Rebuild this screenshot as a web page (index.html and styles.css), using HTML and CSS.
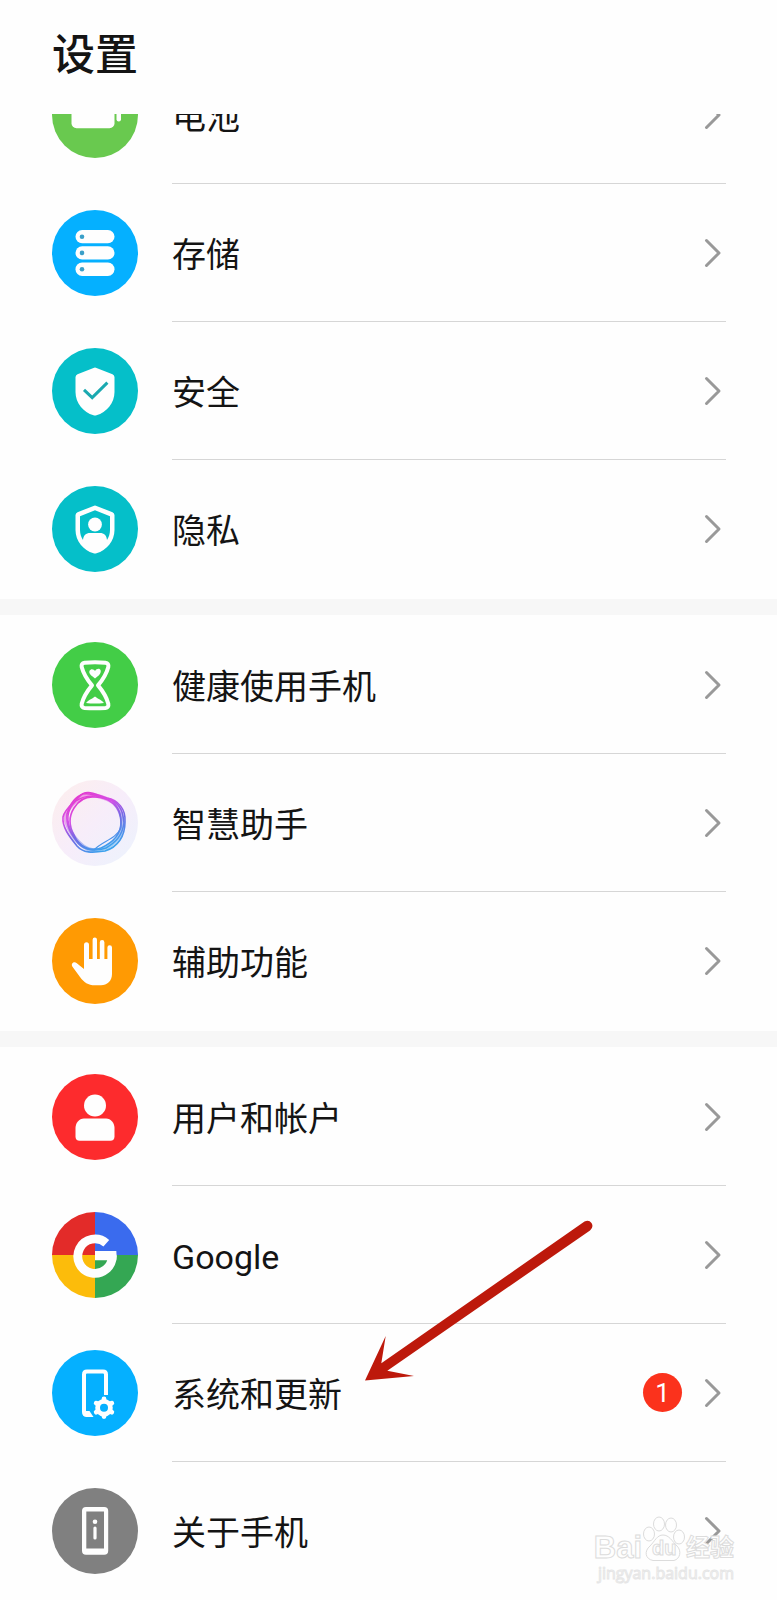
FILE: index.html
```html
<!DOCTYPE html>
<html lang="zh-CN">
<head>
<meta charset="utf-8">
<meta name="viewport" content="width=device-width, initial-scale=1">
<title>设置</title>
<link rel="stylesheet" href="styles.css">
</head>
<body>
<svg class="defs" aria-hidden="true">
  <symbol id="chevron" viewBox="0 0 18 30"><path d="M2.5 2.5 15 15 2.5 27.5" fill="none" stroke="#999" stroke-width="3" stroke-linecap="round" stroke-linejoin="round"/></symbol>
</svg>
<div class="screen">
  <header class="header"><h1 class="title">设置</h1></header>
  <main class="list">
    <nav class="group group-scrolled">
      <a class="row" href="#battery">
        <svg class="icon" viewBox="0 0 86 86" aria-hidden="true"><circle cx="43" cy="43" r="43" fill="#69c94f"/><rect x="19.500" y="28" width="43" height="28.300" rx="5" fill="#fefefe"/><rect x="64.500" y="35" width="4.500" height="14.500" rx="2.200" fill="#fefefe"/></svg>
        <span class="body"><span class="label">电池</span><svg class="chevron" aria-hidden="true"><use href="#chevron"/></svg></span>
      </a>
      <a class="row" href="#storage">
        <svg class="icon" viewBox="0 0 86 86" aria-hidden="true"><circle cx="43" cy="43" r="43" fill="#05b0ff"/><g fill="#fefefe"><rect x="23.500" y="20" width="39" height="13.300" rx="6.600"/><rect x="23.500" y="36.200" width="39" height="13.300" rx="6.600"/><rect x="23.500" y="52.600" width="39" height="13.300" rx="6.600"/></g><g fill="#3a9fc8"><circle cx="30" cy="26.700" r="2.300"/><circle cx="30" cy="42.900" r="2.300"/><circle cx="30" cy="59.200" r="2.300"/></g></svg>
        <span class="body"><span class="label">存储</span><svg class="chevron" aria-hidden="true"><use href="#chevron"/></svg></span>
      </a>
      <a class="row" href="#security">
        <svg class="icon" viewBox="0 0 86 86" aria-hidden="true"><circle cx="43" cy="43" r="43" fill="#05bfc9"/><path d="M41.500 19.900Q43 19.300 44.500 19.900L60.500 26.300Q62.500 27.200 62.500 29.300V44C62.500 55 54.500 64.500 44.500 67.300Q43 67.700 41.500 67.300C31.500 64.500 23.500 55 23.500 44V29.300Q23.500 27.200 25.500 26.300Z" fill="#fefefe"/><path d="M32 41.800 40.200 49.600 55.400 34.600" fill="none" stroke="#1aa9b0" stroke-width="3"/></svg>
        <span class="body"><span class="label">安全</span><svg class="chevron" aria-hidden="true"><use href="#chevron"/></svg></span>
      </a>
      <a class="row" href="#privacy">
        <svg class="icon" viewBox="0 0 86 86" aria-hidden="true"><circle cx="43" cy="43" r="43" fill="#05bfc9"/><path d="M41.500 19.900Q43 19.300 44.500 19.900L60.500 26.300Q62.500 27.200 62.500 29.300V44C62.500 55 54.500 64.500 44.500 67.300Q43 67.700 41.500 67.300C31.500 64.500 23.500 55 23.500 44V29.300Q23.500 27.200 25.500 26.300Z" fill="#fefefe"/><path d="M43 24.300 58 30.300V44C58 48 56.800 51 55 54 54.700 49.500 52 47 48 47H38C34 47 31.300 49.500 31 54 29.200 51 28 48 28 44V30.300Z" fill="#05bfc9"/><circle cx="43" cy="38.500" r="6.900" fill="#fefefe"/></svg>
        <span class="body"><span class="label">隐私</span><svg class="chevron" aria-hidden="true"><use href="#chevron"/></svg></span>
      </a>
    </nav>
    <nav class="group">
      <a class="row" href="#balance">
        <svg class="icon" viewBox="0 0 86 86" aria-hidden="true"><circle cx="43" cy="43" r="43" fill="#43cd47"/><path d="M32.500 20.800Q43 19.800 53.500 20.800 57 21.200 56.300 25C54.500 32 51 37.500 46 43.400 51 49.300 54.500 54.800 56.300 61.800Q57 65.500 53.500 65.900 43 66.800 32.500 65.900 29 65.500 29.700 61.800C31.500 54.800 35 49.300 40 43.400 35 37.500 31.500 32 29.700 25Q29 21.200 32.500 20.800Z" fill="none" stroke="#fefefe" stroke-width="4" stroke-linejoin="round"/><path d="M43 36.500C39 33.500 36.500 31.500 37.500 28.800 38.800 26.200 42 27 43 29 44.500 26.500 48 26 48.700 28.500 49.200 31.500 46.500 34 43 36.500Z" fill="#fefefe"/><path d="M34 61C36 58 39 57.600 43 54.500 47 57.600 50 58 52 61Q43 62 34 61Z" fill="#fefefe"/></svg>
        <span class="body"><span class="label">健康使用手机</span><svg class="chevron" aria-hidden="true"><use href="#chevron"/></svg></span>
      </a>
      <a class="row" href="#assistant">
        <svg class="icon" viewBox="0 0 86 86" aria-hidden="true">
          <defs>
            <linearGradient id="ring" x1=".25" y1="0" x2=".75" y2="1"><stop offset="0" stop-color="#e33bd0"/><stop offset=".3" stop-color="#d24fe6"/><stop offset=".58" stop-color="#7468e4"/><stop offset="1" stop-color="#35a9ee"/></linearGradient>
            <linearGradient id="halo" x1="0" y1="0" x2="1" y2="1"><stop offset="0" stop-color="#fdeeec"/><stop offset=".5" stop-color="#f7edfa"/><stop offset="1" stop-color="#ebf3fd"/></linearGradient>
          </defs>
          <circle cx="43" cy="43" r="43" fill="url(#halo)"/>
          <g fill="none" stroke="url(#ring)">
            <path d="M27 17C34 8 44 15 55 18 66 20 74 29 73 42 73 56 66 67 53 71 40 73 31 73 25 66 17 56 10 47 11 37 13 28 21 24 27 17Z" stroke-width="1.600"/>
            <path d="M31 14C42 12 49 19 59 20 70 25 71 34 72 43 70 56 64 62 54 68 43 72 32 70 26 63 19 54 14 46 15 34 18 24 22 17 31 14Z" stroke-width="1.600"/>
            <path d="M43 17C58 17 69 27 69 42 69 55 60 63 49 68 39 72 27 67 22 55 17 46 17 36 22 28 27 20 34 16 43 17Z" stroke-width="1.600"/>
            <path d="M24 21C34 14 47 15 57 19 67 24 70 37 69 48 63 60 50 61 42 70 33 70 26 63 21 55 15 44 13 31 24 21Z" stroke-width="1.200"/>
            <path d="M28 18C39 12 52 17 61 22 71 31 72 45 68 55 62 65 52 71 40 70 27 68 17 51 14 41 12 32 20 24 28 18Z" stroke-width="4" opacity=".45"/>
          </g>
        </svg>
        <span class="body"><span class="label">智慧助手</span><svg class="chevron" aria-hidden="true"><use href="#chevron"/></svg></span>
      </a>
      <a class="row" href="#accessibility">
        <svg class="icon" viewBox="0 0 86 86" aria-hidden="true"><circle cx="43" cy="43" r="43" fill="#ff9a03"/><path d="M32 51V26.800a2.500 2.500 0 0 1 5 0V41H40.600V21.800a2.200 2.200 0 0 1 4.400 0V41H47.800V24.300a2.300 2.300 0 0 1 4.600 0V41H55.400V29.500a2.300 2.300 0 0 1 4.600 0V56C60 63 55 67.300 49 67.300H43C36 67.300 32 64.500 28 59L20.300 48.500C18.700 45.500 22 43.200 24.500 45Z" fill="#fefefe"/></svg>
        <span class="body"><span class="label">辅助功能</span><svg class="chevron" aria-hidden="true"><use href="#chevron"/></svg></span>
      </a>
    </nav>
    <nav class="group">
      <a class="row" href="#accounts">
        <svg class="icon" viewBox="0 0 86 86" aria-hidden="true"><circle cx="43" cy="43" r="43" fill="#fd2b2d"/><circle cx="43" cy="31.500" r="11" fill="#fefefe"/><path d="M32 44.500H54C59 44.500 62.500 49 62.500 54V62.500Q62.500 66.700 58.300 66.700H27.700Q23.500 66.700 23.500 62.500V54C23.500 49 27 44.500 32 44.500Z" fill="#fefefe"/></svg>
        <span class="body"><span class="label">用户和帐户</span><svg class="chevron" aria-hidden="true"><use href="#chevron"/></svg></span>
      </a>
      <a class="row" href="#google">
        <svg class="icon" viewBox="0 0 86 86" aria-hidden="true"><path d="M43 43V0A43 43 0 0 0 0 43Z" fill="#e32b29"/><path d="M43 43H86A43 43 0 0 0 43 0Z" fill="#3a6bee"/><path d="M43 43H0A43 43 0 0 0 43 86Z" fill="#fcbc0b"/><path d="M43 43V86A43 43 0 0 0 86 43Z" fill="#34a753"/><path d="M54.300 31.200A17.200 17.200 0 1 0 60.200 43.700" fill="none" stroke="#fefefe" stroke-width="8.800"/><path d="M43 39H64.300Q65 43.500 64.300 48.200H43Z" fill="#fefefe"/></svg>
        <span class="body"><span class="label">Google</span><svg class="chevron" aria-hidden="true"><use href="#chevron"/></svg></span>
      </a>
      <a class="row" href="#system">
        <svg class="icon" viewBox="0 0 86 86" aria-hidden="true"><circle cx="43" cy="43" r="43" fill="#05b0ff"/><path d="M54 45V24.500Q54 21.500 51 21.500H35Q32 21.500 32 24.500V62Q32 65 35 65H38" fill="none" stroke="#fefefe" stroke-width="4"/><path d="M33 61H37.500L41.500 67H34Z" fill="#fefefe"/><circle cx="52" cy="57.700" r="6.400" fill="none" stroke="#fefefe" stroke-width="4.800"/><g stroke="#fefefe" stroke-width="4.800" stroke-linecap="round"><path d="M52 48.900v1M52 65.500v1M44.200 53.200l.9.500M58.900 61.700l.9.500M59.800 53.200l-.9.500M45.100 61.700l-.9.500"/></g></svg>
        <span class="body"><span class="label">系统和更新</span><span class="badge">1</span><svg class="chevron" aria-hidden="true"><use href="#chevron"/></svg></span>
        <svg class="pointer" viewBox="0 0 228 162" aria-hidden="true"><path d="M219.500 1.500Q224-.5 226.500 3 229 7 225 10.500L22.300 150.700 49 156 0 160.500 20.700 116 16.300 143.300Z" fill="#bd190b"/></svg>
      </a>
      <a class="row" href="#about">
        <svg class="icon" viewBox="0 0 86 86" aria-hidden="true"><circle cx="43" cy="43" r="43" fill="#808080"/><path fill-rule="evenodd" d="M34 19H52.200Q56.200 19 56.200 23V62.700Q56.200 66.700 52.200 66.700H34Q30 66.700 30 62.700V23Q30 19 34 19ZM34.300 23.500V60.500H52V23.500Z" fill="#fefefe"/><circle cx="43" cy="33.700" r="2.300" fill="#fefefe"/><path d="M43 40V50" stroke="#fefefe" stroke-width="3.200" stroke-linecap="round"/></svg>
        <span class="body"><span class="label">关于手机</span><svg class="chevron" aria-hidden="true"><use href="#chevron"/></svg></span>
      </a>
    </nav>
  </main>
  <div class="watermark">
    <div class="brand">
      <span>Bai</span>
      <span class="paw"><svg viewBox="0 0 44 46" aria-hidden="true"><g fill="#fefefe" stroke="#dcdcdc"><ellipse cx="7" cy="18" rx="5.500" ry="7"/><ellipse cx="17" cy="8" rx="5.500" ry="7"/><ellipse cx="29" cy="9" rx="5.500" ry="7"/><ellipse cx="37" cy="21" rx="5.500" ry="7"/><path d="M21 19C27 19 30 25 35 30 40 35 38 43 32 44.500H11C3 43 2 35 8 30 13 25 15 19 21 19Z"/></g></svg><span class="du">du</span></span>
      <span class="cn">经验</span>
    </div>
    <div class="site">jingyan.baidu.com</div>
  </div>
</div>
</body>
</html>
```
FILE: styles.css
```css
* { box-sizing: border-box; }

body {
  margin: 0;
  background: #fefefe;
  color: #141414;
  font-family: Roboto, "Noto Sans CJK SC", sans-serif;
}

.defs { position: absolute; width: 0; height: 0; }

.screen { position: relative; }

.header {
  display: flex;
  align-items: center;
  height: 114px;
  padding: 0 52px 4px;
}

.title {
  margin: 0;
  font-size: 43px;
  line-height: 60px;
  font-weight: 500;
}

/* The first row is partly scrolled under the header. */
.list { overflow: hidden; }
.group-scrolled { margin-top: -68px; }

.group + .group::before {
  content: "";
  display: block;
  height: 16px;
  margin: 1px 0;
  background: #f7f7f7;
}

.row {
  position: relative;
  display: flex;
  align-items: center;
  gap: 34px;
  height: 138px;
  padding: 0 51px 0 52px;
  color: inherit;
  text-decoration: none;
}

.icon { flex: none; width: 86px; height: 86px; }

.body {
  flex: 1;
  display: flex;
  align-items: center;
  gap: 22px;
  height: 100%;
  padding-right: 4px;
  border-bottom: 1px solid #d6d6d6;
}

.row:last-child .body { border-bottom-color: transparent; }

.label { flex: 1; padding-top: 4px; font-size: 34px; line-height: 48px; }

.chevron { flex: none; width: 18px; height: 30px; }

.badge {
  width: 39px;
  height: 39px;
  border-radius: 50%;
  background: #fb321c;
  color: #fff;
  font-size: 26px;
  line-height: 41px;
  text-align: center;
}

.pointer {
  position: absolute;
  top: -104px;
  left: 365px;
  width: 228px;
  height: 162px;
  pointer-events: none;
}

.watermark {
  position: absolute;
  right: 43px;
  bottom: 16px;
  color: #fefefe;
  font-family: "Liberation Sans", "Noto Sans CJK SC", sans-serif;
  -webkit-text-stroke: 1px #dcdcdc;
  pointer-events: none;
}

.brand {
  display: flex;
  align-items: flex-end;
  font-size: 31px;
  line-height: 28px;
  font-weight: 700;
}

.paw { position: relative; width: 44px; height: 46px; }
.paw svg { display: block; width: 44px; height: 46px; }
.du { position: absolute; left: 10px; bottom: 0; font-size: 20px; }
.cn { font-size: 24px; }

.site {
  color: #fefefe;
  font-family: "Open Sans", sans-serif;
  font-size: 16px;
  line-height: 22px;
  text-align: right;
  -webkit-text-stroke: 1px #e6e6e6;
}
```
